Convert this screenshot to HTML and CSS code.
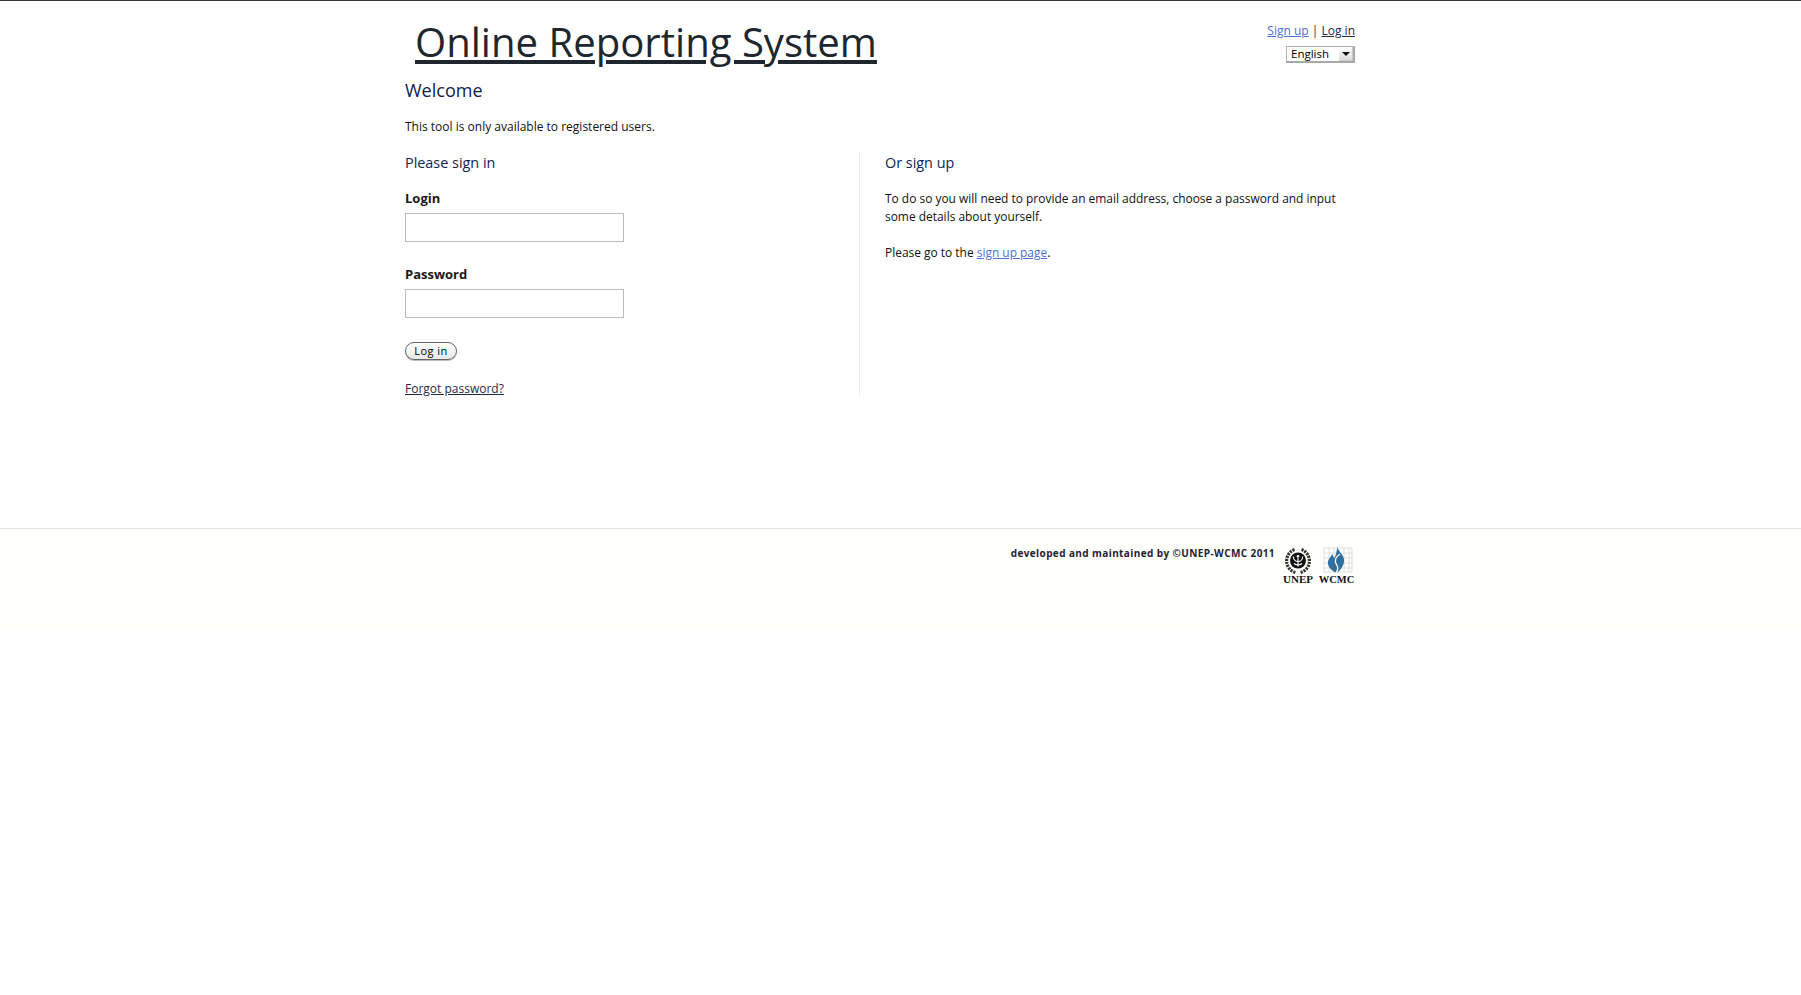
FILE: index.html
```html
<!DOCTYPE html>
<html lang="en">
<head>
<meta charset="utf-8">
<title>Online Reporting System</title>
<link rel="stylesheet" href="styles.css">
</head>
<body>
<div class="wrap">
  <header class="header">
    <h1 class="title"><a href="#">Online Reporting System</a></h1>
    <div class="account">
      <div class="account-links"><a href="#" class="blue">Sign up</a> <span class="sep">|</span> <a href="#">Log in</a></div>
      <div class="lang">
        <select class="lang-select"><option>English</option></select>
        <span class="lang-arrow"></span>
      </div>
    </div>
  </header>
  <h2 class="welcome">Welcome</h2>
  <p class="intro">This tool is only available to registered users.</p>
  <div class="columns">
    <section class="col-left">
      <h3 class="sub">Please sign in</h3>
      <form class="form">
        <label class="label" for="login">Login</label>
        <input class="input" id="login" type="text">
        <label class="label second" for="password">Password</label>
        <input class="input" id="password" type="password">
        <button class="btn" type="button">Log in</button>
      </form>
      <a href="#" class="forgot">Forgot password?</a>
    </section>
    <section class="col-right">
      <h3 class="sub">Or sign up</h3>
      <p class="para">To do so you will need to provide an email address, choose a password and input some details about yourself.</p>
      <p class="para gap">Please go to the <a href="#" class="blue">sign up page</a>.</p>
    </section>
  </div>
</div>
<footer class="footer">
  <div class="footer-inner">
    <span class="credit">developed and maintained by ©UNEP-WCMC 2011</span>
    <svg class="logo" width="32" height="38" viewBox="0 0 32 38">
      <path d="M12.5 2.6A12 12 0 0 0 14 25.6M19.5 2.6A12 12 0 0 1 18 25.6" fill="none" stroke="#333" stroke-width="3.2" stroke-dasharray="2.2 .9"/>
      <circle cx="16" cy="13.5" r="8" fill="#111"/>
      <circle cx="16" cy="9.2" r="1.3" fill="#fff"/>
      <path d="M16 10.5v9M11.2 9.5c.4 3.6 2.4 5 4.8 5s4.400-1.400 4.800-5M12 16.500c2.200 2 5.800 2 8 0" fill="none" stroke="#fff" stroke-width="1.100"/>
      <text x="16" y="36" class="logo-text">UNEP</text>
    </svg>
    <svg class="logo" width="36" height="38" viewBox="0 0 36 38">
      <path d="M5 1h28v24H5zM5 6h28M5 11h28M5 16h28M5 21h28M10 1v24M15 1v24M20 1v24M25 1v24M30 1v24" fill="none" stroke="#c9cdd1" stroke-width=".6"/>
      <path d="M18 0c1 4 6 7 7 12 .8 5-2.500 10-7 14-3-1-8-4-9-9-.7-4 2.500-7 4.500-10 .5 2 1 3 2 4 1.500-3 2.500-7 2.500-11z" fill="#2f6f9f"/>
      <path d="M21 7c-4.500 3-6 7-3.500 10.500 2 3 1.500 6-1 9.500" fill="none" stroke="#fff" stroke-width="1.300"/>
      <text x="17.500" y="36" class="logo-text wcmc">WCMC</text>
    </svg>
  </div>
</footer>
</body>
</html>
```
FILE: styles.css
```css
* { box-sizing: border-box; }
html, body { margin: 0; padding: 0; background: #fff; }
body {
  border-top: 1px solid #3c3c3c;
  font-family: "Open Sans", "Liberation Sans", sans-serif;
  font-size: 12px;
  line-height: 18px;
  color: #111;
}
a { color: #1f2a4a; }
a.blue { color: #4c6fd6; }
.wrap { width: 950px; margin-left: 405px; height: 527px; }
.header { display: flex; justify-content: space-between; height: 77px; }
.title { margin: 0; padding: 13px 0 0 10px; font-size: 40.1px; line-height: 56px; font-weight: 400; }
.title a { color: #20262e; }
.account { padding-top: 21px; text-align: right; }
.account-links { line-height: 18px; }
.sep { color: #1f2a4a; }
.lang { position: relative; width: 69px; height: 17px; margin: 6px 0 0 auto; }
.lang-select {
  appearance: none; display: block; width: 100%; height: 100%;
  border: 1px solid #b4b4b4; border-right: 2px solid #a8a8a8; border-bottom: 2px solid #a8a8a8; background: #fff;
  font: 11.5px/14px "Open Sans", sans-serif; color: #000; padding: 0 0 0 4px; border-radius: 0;
}
.lang-arrow {
  position: absolute; right: 2px; top: 1px; width: 14px; height: 14px;
  background: linear-gradient(#fff, #dcdcdc); border-right: 1px solid #ccc; border-bottom: 1px solid #ccc;
  pointer-events: none;
}
.lang-arrow::after {
  content: ""; position: absolute; left: 3px; top: 5px;
  border: 4px solid transparent; border-top-color: #111; border-bottom: 0;
}
.welcome { margin: 0; font-size: 18px; line-height: 24px; font-weight: 400; color: #12224e; }
.intro { margin: 16px 0 0; height: 18px; }
.columns { display: flex; margin-top: 16px; }
.col-left { width: 455px; height: 245px; border-right: 1px solid #ececec; }
.col-right { padding-left: 25px; flex: 1; }
.sub { margin: 0; padding-top: 1px; font-size: 14.4px; line-height: 20px; font-weight: 400; color: #12224e; }
.form { display: flex; flex-direction: column; align-items: flex-start; margin-top: 16px; }
.label { font-size: 13px; font-weight: 700; color: #1a1a1a; line-height: 18px; }
.label.second { margin-top: 23px; }
.input { width: 219px; height: 29px; margin-top: 6px; border: 1px solid #bbb; background: #fff; padding: 0 4px; }
.btn {
  margin-top: 24px; width: 52px; height: 18px; padding: 0; border: 1px solid #666; border-radius: 9px;
  background: linear-gradient(#fff, #e9e9e9); box-shadow: 0 1px 0 #bbb;
  font: 11px/14px "Open Sans", sans-serif; letter-spacing: .5px; color: #000;
}
.forgot { display: inline-block; margin-top: 20px; }
.para { margin: 17px 0 0; width: 460px; font-size: 11.95px; }
.para.gap { margin-top: 18px; }
.footer { height: 100px; background: #fffffb; border-top: 1px solid #e2e2e2; }
.footer-inner { width: 950px; margin-left: 405px; display: flex; justify-content: flex-end; gap: 5px; padding-top: 17px; }
.credit { font-size: 10px; line-height: 14px; font-weight: 700; letter-spacing: .4px; color: #1d2233; margin-right: 2px; }
.logo { display: block; margin-top: 1px; }
.logo-text { font: 700 11px "Liberation Serif", serif; text-anchor: middle; fill: #111; }
.logo-text.wcmc { font-size: 10.5px; }
```
